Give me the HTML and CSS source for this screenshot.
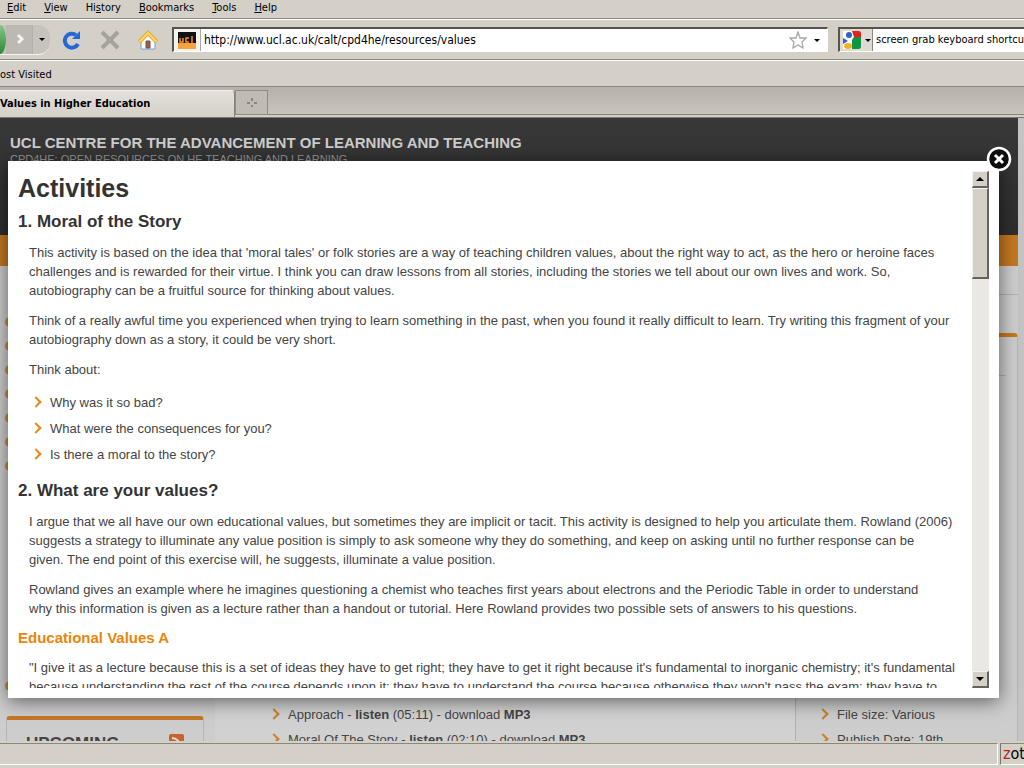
FILE: index.html
```html
<!DOCTYPE html>
<html lang="en">
<head>
    <meta charset="UTF-8">
    <meta name="viewport" content="width=device-width, initial-scale=1.0">
    <title>Values in Higher Education</title>
    <link rel="stylesheet" href="styles.css">
</head>
<body>
    <nav class="menubar">
        <button><u>E</u>dit</button>
        <button><u>V</u>iew</button>
        <button>Hi<u>s</u>tory</button>
        <button><u>B</u>ookmarks</button>
        <button><u>T</u>ools</button>
        <button><u>H</u>elp</button>
    </nav>

    <div class="toolbar">
        <div class="history">
            <button class="back" aria-label="Back"></button>
            <button class="forward" aria-label="Forward">
                <svg width="12" height="14" viewBox="0 0 12 14"><path d="M2 3l4 4-4 4" fill="none" stroke="#f4f2ee" stroke-width="3"/></svg>
            </button>
            <button class="recent" aria-label="Recent pages"><i class="arrow"></i></button>
        </div>
        <button class="tool" aria-label="Reload">
            <svg width="20" height="20" viewBox="0 0 20 20"><path d="M16 14A7 7 0 1 1 14 5" fill="none" stroke="#2468d4" stroke-width="4"/><path d="M18 1v8h-8z" fill="#2468d4"/></svg>
        </button>
        <button class="tool" aria-label="Stop">
            <svg width="20" height="20" viewBox="0 0 20 20"><path d="M2 2l16 16M18 2L2 18" stroke="#a5a29c" stroke-width="4"/></svg>
        </button>
        <button class="tool" aria-label="Home">
            <svg width="20" height="20" viewBox="0 0 20 20"><path d="M3 10v9h14v-9l-7-6z" fill="#fbfbff" stroke="#7da0d8"/><path d="M1 12l9-9 9 9" fill="none" stroke="#c98a1c" stroke-width="4"/><path d="M1 12l9-9 9 9" fill="none" stroke="#ffd45a" stroke-width="3"/><path d="M8 11h4v7H8z" fill="#a4583c" stroke="#5e5a60"/></svg>
        </button>
        <div class="field address">
            <span class="site-icon">
                <svg width="18" height="17" viewBox="0 0 18 17"><path d="M0 0h18v17H0z" fill="#111"/><path d="M0 11h18v6H0z" fill="#f5a13c"/><path d="M2 6v4h3V6M11 6H8v4h3M14 4v7" fill="none" stroke="#f5901e" stroke-width="1.500"/></svg>
            </span>
            <input type="text" aria-label="Address" value="http://www.ucl.ac.uk/calt/cpd4he/resources/values">
            <button class="star" aria-label="Bookmark this page">
                <svg width="18" height="18" viewBox="0 0 18 18"><path d="M9 1l2 6h6l-4 4 1 6-5-3-5 3 1-6-4-4h6z" fill="#fff" stroke="#a8a8a8" stroke-width="1.300"/></svg>
            </button>
            <button class="drop" aria-label="Show history"><i class="arrow"></i></button>
        </div>
        <div class="field search">
            <button class="engine" aria-label="Choose search engine">
                <svg width="18" height="18" viewBox="0 0 18 18"><path d="M0 0h18v18H0z" fill="#fff"/><path d="M9 0h7a2 2 0 0 1 2 2v4h-7z" fill="#e2231a"/><path d="M11 6h7v10a2 2 0 0 1-2 2H9V9z" fill="#119444"/><path d="M0 7l5 3-5 3z" fill="#2d62c8"/><circle cx="6" cy="4" r="3" fill="#2d62c8"/><ellipse cx="5" cy="15" rx="4" ry="3" fill="#f0b323"/></svg>
                <i class="arrow"></i>
            </button>
            <input type="text" aria-label="Search" value="screen grab keyboard shortcut">
        </div>
    </div>

    <div class="bookmarks"><a href="#">ost Visited</a></div>

    <div class="tabs">
        <button class="tab">Values in Higher Education</button>
        <button class="new-tab" aria-label="New tab">
            <svg width="10" height="10" viewBox="0 0 10 10"><path d="M5 0v3M5 7v2M0 5h3M7 5h3" stroke="#77746e" stroke-width="1.500"/></svg>
        </button>
    </div>

    <main class="viewport">
        <div class="site">
            <header class="site-header">
                <h2>UCL CENTRE FOR THE ADVANCEMENT OF LEARNING AND TEACHING</h2>
                <p>CPD4HE: OPEN RESOURCES ON HE TEACHING AND LEARNING</p>
            </header>
            <div class="site-nav"></div>
            <div class="site-body">
                <aside class="left">
                    <ul class="dots">
                        <li></li><li></li><li></li><li></li><li></li><li></li><li></li><li class="last"></li>
                    </ul>
                    <section class="card upcoming">
                        <h3>UPCOMING</h3>
                        <svg width="15" height="15" viewBox="0 0 15 15"><rect width="15" height="15" rx="2" fill="#c8632c"/><path d="M3 4a8 8 0 0 1 8 8M3 8a4 4 0 0 1 4 4" fill="none" stroke="#ddd" stroke-width="2"/></svg>
                    </section>
                </aside>
                <section class="recordings">
                    <ul class="arrows">
                        <li>Approach - <b>listen</b> (05:11) - download <b>MP3</b></li>
                        <li>Moral Of The Story - <b>listen</b> (02:10) - download <b>MP3</b></li>
                    </ul>
                </section>
                <aside class="right">
                    <div class="card details">
                        <ul class="arrows">
                            <li>File size: Various</li>
                            <li>Publish Date: 19th</li>
                        </ul>
                    </div>
                </aside>
            </div>
        </div>

        <div class="modal" role="dialog" aria-label="Activities">
            <article class="content">
                <h1>Activities</h1>
                <h2>1. Moral of the Story</h2>
                <p>This activity is based on the idea that 'moral tales' or folk stories are a way of teaching children values, about the right way to act, as the hero or heroine faces<br>
                challenges and is rewarded for their virtue. I think you can draw lessons from all stories, including the stories we tell about our own lives and work. So,<br>
                autobiography can be a fruitful source for thinking about values.</p>
                <p>Think of a really awful time you experienced when trying to learn something in the past, when you found it really difficult to learn. Try writing this fragment of your<br>
                autobiography down as a story, it could be very short.</p>
                <p>Think about:</p>
                <ul class="arrows">
                    <li>Why was it so bad?</li>
                    <li>What were the consequences for you?</li>
                    <li>Is there a moral to the story?</li>
                </ul>
                <h2>2. What are your values?</h2>
                <p>I argue that we all have our own educational values, but sometimes they are implicit or tacit. This activity is designed to help you articulate them. Rowland (2006)<br>
                suggests a strategy to illuminate any value position is simply to ask someone why they do something, and keep on asking until no further response can be<br>
                given. The end point of this exercise will, he suggests, illuminate a value position.</p>
                <p>Rowland gives an example where he imagines questioning a chemist who teaches first years about electrons and the Periodic Table in order to understand<br>
                why this information is given as a lecture rather than a handout or tutorial. Here Rowland provides two possible sets of answers to his questions.</p>
                <h3>Educational Values A</h3>
                <p>"I give it as a lecture because this is a set of ideas they have to get right; they have to get it right because it's fundamental to inorganic chemistry; it's fundamental<br>
                because understanding the rest of the course depends upon it; they have to understand the course because otherwise they won't pass the exam; they have to</p>
            </article>
            <div class="scrollbar">
                <button aria-label="Scroll up"><i class="arrow up"></i></button>
                <div class="thumb"></div>
                <button class="end" aria-label="Scroll down"><i class="arrow"></i></button>
            </div>
            <button class="close" aria-label="Close">
                <svg width="26" height="26" viewBox="0 0 26 26"><circle cx="13" cy="13" r="11" fill="#0c0c0c" stroke="#fff" stroke-width="2.500"/><path d="M9 9l8 8M17 9l-8 8" stroke="#fff" stroke-width="3"/></svg>
            </button>
        </div>
    </main>

    <footer class="statusbar">
        <div class="panel message"></div>
        <div class="panel zotero"><span>z</span>otero</div>
    </footer>
</body>
</html>
```
FILE: styles.css
```css
*{
    box-sizing: border-box;
}
body{
    margin: 0;
    height: 100vh;
    display: flex;
    flex-direction: column;
    overflow: hidden;
    background: #d4d0c8;
    color: #000;
    font: 11px/14px "DejaVu Sans Condensed", "DejaVu Sans", sans-serif;
}
button{
    padding: 0;
    border: 0;
    background: none;
    color: inherit;
    font: inherit;
}
svg{
    display: block;
}
h1, h2, h3, p, ul{
    margin: 0;
    padding: 0;
}
ul{
    list-style: none;
}
.arrow{
    border: 3px solid transparent;
    border-top-color: #000;
    border-bottom: 0;
}

/* browser bars */
.menubar{
    display: flex;
    gap: 18px;
    height: 19px;
    padding: 1px 7px 3px;
    border-bottom: 1px solid #8a877f;
}
.toolbar{
    display: flex;
    align-items: center;
    height: 41px;
    border-top: 1px solid #fff;
    border-bottom: 1px solid #8a877f;
}
.history{
    display: flex;
    width: 50px;
    height: 30px;
    margin-right: 12px;
    border-radius: 0 12px 12px 0;
    background: #c6c3bc;
    border-bottom: 1px solid #f4f2ee;
}
.back{
    width: 6px;
    border-radius: 0 100% 100% 0 / 0 50% 50% 0;
    background: linear-gradient(#8cc38c, #2a8a34);
}
.forward{
    width: 27px;
    padding-left: 10px;
    background: #bcb9b2;
    border-right: 1px solid #b3b0a8;
}
.recent{
    display: flex;
    flex: 1;
    align-items: center;
    justify-content: center;
}
.tool{
    margin-right: 18px;
}
.field{
    display: flex;
    align-items: center;
    height: 25px;
    background: #fff;
    border: 1px solid #fff;
    border-top: 2px solid #55534e;
    border-left: 2px solid #55534e;
}
.field input{
    flex: 1;
    min-width: 0;
    padding: 0 3px;
    border: 0;
    background: none;
    color: #000;
    font: inherit;
    outline: 0;
}
.address{
    flex: 1;
    margin: 0 10px 0 -4px;
}
.address input{
    font-size: 12px;
}
.site-icon{
    display: flex;
    align-items: center;
    align-self: stretch;
    width: 27px;
    padding-left: 4px;
    background: #f4f3f0;
    border-right: 1px solid #aaa;
}
.drop{
    display: flex;
    align-items: center;
    justify-content: center;
    width: 20px;
    height: 20px;
}
.search{
    width: 186px;
    border-right: 0;
}
.search input{
    padding-right: 0;
}
.engine{
    display: flex;
    flex: none;
    align-items: center;
    align-self: stretch;
    gap: 4px;
    width: 33px;
    padding-left: 3px;
    background: #dedbd5;
    border-right: 1px solid #888;
}
.bookmarks{
    height: 27px;
    padding: 7px 0;
    border-top: 1px solid #fff;
    border-bottom: 1px solid #8a877f;
}
.bookmarks a{
    color: #000;
    text-decoration: none;
}
.tabs{
    display: flex;
    height: 31px;
    padding-top: 3px;
    background: linear-gradient(#b5b1a9, #c9c5bd 27px, #85827b 27px, #85827b 28px, #d4d0c8 28px, #d4d0c8 30px, #777 30px);
}
.tab{
    width: 235px;
    height: 27px;
    text-align: left;
    font-weight: bold;
    background: linear-gradient(#e4e1dc, #d4d0c8);
    border-top: 1px solid #f4f2ee;
    border-right: 1px solid #85827b;
    border-radius: 0 4px 0 0;
    white-space: nowrap;
}
.new-tab{
    display: flex;
    align-items: center;
    justify-content: center;
    width: 33px;
    height: 25px;
    border: 1px solid #8f8c85;
    background: #c0bcb4;
}

/* page behind the dialog */
.viewport{
    flex: 1;
    min-height: 0;
    position: relative;
    overflow: hidden;
    background: #c4c4c4;
    font-family: "Liberation Sans", Arial, sans-serif;
    font-size: 13px;
    line-height: 19px;
}
.site{
    margin-right: 6px;
    background: #cdcdcd;
    color: #444;
}
.site-header{
    height: 117px;
    padding: 16px 10px;
    background: linear-gradient(#383838, #2e2e2e);
    color: #ccc;
}
.site-header h2{
    font-size: 15px;
    line-height: 18px;
}
.site-header p{
    font-size: 11px;
    line-height: 14px;
    color: #999;
}
.site-nav{
    height: 31px;
    background: #c47822;
}
.site-body{
    display: grid;
    grid-template-columns: 204px 1fr 223px;
}
.dots{
    height: 450px;
    padding: 51px 0 0 5px;
}
.dots li{
    width: 10px;
    height: 10px;
    margin-bottom: 14px;
    border-radius: 5px;
    background: #c98a35;
}
.dots .last{
    margin-top: 210px;
}
.card{
    border: 1px solid #b5b5b5;
    border-top: 4px solid #c47822;
    border-radius: 4px 4px 0 0;
}
.upcoming{
    display: flex;
    justify-content: space-between;
    height: 60px;
    margin-left: 6px;
    padding: 14px 19px;
}
.upcoming h3{
    font-size: 17px;
    line-height: 19px;
}
.arrows li{
    padding: 3px 0 4px 21px;
}
.arrows li::before{
    content: "";
    float: left;
    width: 6px;
    height: 6px;
    margin: 5px 0 0 -18px;
    border: solid #e88a1a;
    border-width: 2px 2px 0 0;
    transform: rotate(45deg);
}
.recordings{
    margin-left: 11px;
    padding: 436px 0 0 52px;
    background: #d1d1d1;
}
.right{
    padding-top: 67px;
    border-left: 1px solid #b0b0b0;
    background: linear-gradient(#b0b0b0, #b0b0b0) 0 28px / 100% 1px no-repeat;
}
.details{
    padding: 365px 0 0 20px;
    border-left: 0;
    background: linear-gradient(#b0b0b0, #b0b0b0) 0 38px / 210px 1px no-repeat;
}
.site .arrows li{
    height: 25px;
}
.site .arrows li::before{
    border-color: #c98228;
}

/* dialog */
.modal{
    position: absolute;
    top: 43px;
    right: 25px;
    bottom: 43px;
    left: 8px;
    display: flex;
    padding: 10px;
    background: #fff;
    color: #444;
    box-shadow: 0 3px 18px rgba(0, 0, 0, 0.55);
}
.content{
    flex: 1;
    min-width: 0;
    overflow: hidden;
    white-space: nowrap;
}
.content h1{
    font-size: 25px;
    line-height: 34px;
    color: #333;
}
.content h2{
    margin: 13px 0 11px;
    font-size: 17px;
    line-height: 20px;
    color: #333;
}
.content h1 + h2{
    margin-top: 7px;
}
.content h3{
    margin-top: 9px;
    font-size: 15px;
    line-height: 18px;
    color: #e8860c;
}
.content p{
    margin: 0 0 11px 11px;
}
.content h3 + p{
    margin-top: 11px;
}
.content ul{
    margin-left: 11px;
}
.scrollbar{
    display: flex;
    flex-direction: column;
    width: 17px;
    background: #eae8e3;
}
.scrollbar button{
    display: flex;
    align-items: center;
    justify-content: center;
    height: 17px;
}
.scrollbar button, .thumb{
    background: #d4d0c8;
    border: 1px solid #f4f2ee;
    border-right: 2px solid #66635d;
    border-bottom: 2px solid #66635d;
}
.scrollbar .arrow{
    border-width: 4px 4px 0;
}
.scrollbar .up{
    border-width: 0 4px 4px;
    border-bottom-style: solid;
    border-bottom-color: #000;
}
.thumb{
    height: 91px;
}
.scrollbar .end{
    margin-top: auto;
}
.close{
    position: absolute;
    top: -15px;
    right: -13px;
}

/* status bar */
.statusbar{
    display: flex;
    gap: 2px;
    height: 27px;
    padding-bottom: 3px;
    border-top: 2px solid #d4d0c8;
}
.panel{
    border-top: 1px solid #8a877f;
    border-bottom: 1px solid #fff;
}
.message{
    flex: 1;
    border-right: 1px solid #fff;
}
.zotero{
    width: 24px;
    padding-left: 2px;
    overflow: hidden;
    border-left: 1px solid #77746e;
    font: 16px/20px "DejaVu Sans Condensed", sans-serif;
}
.zotero span{
    color: #b32626;
}
```
